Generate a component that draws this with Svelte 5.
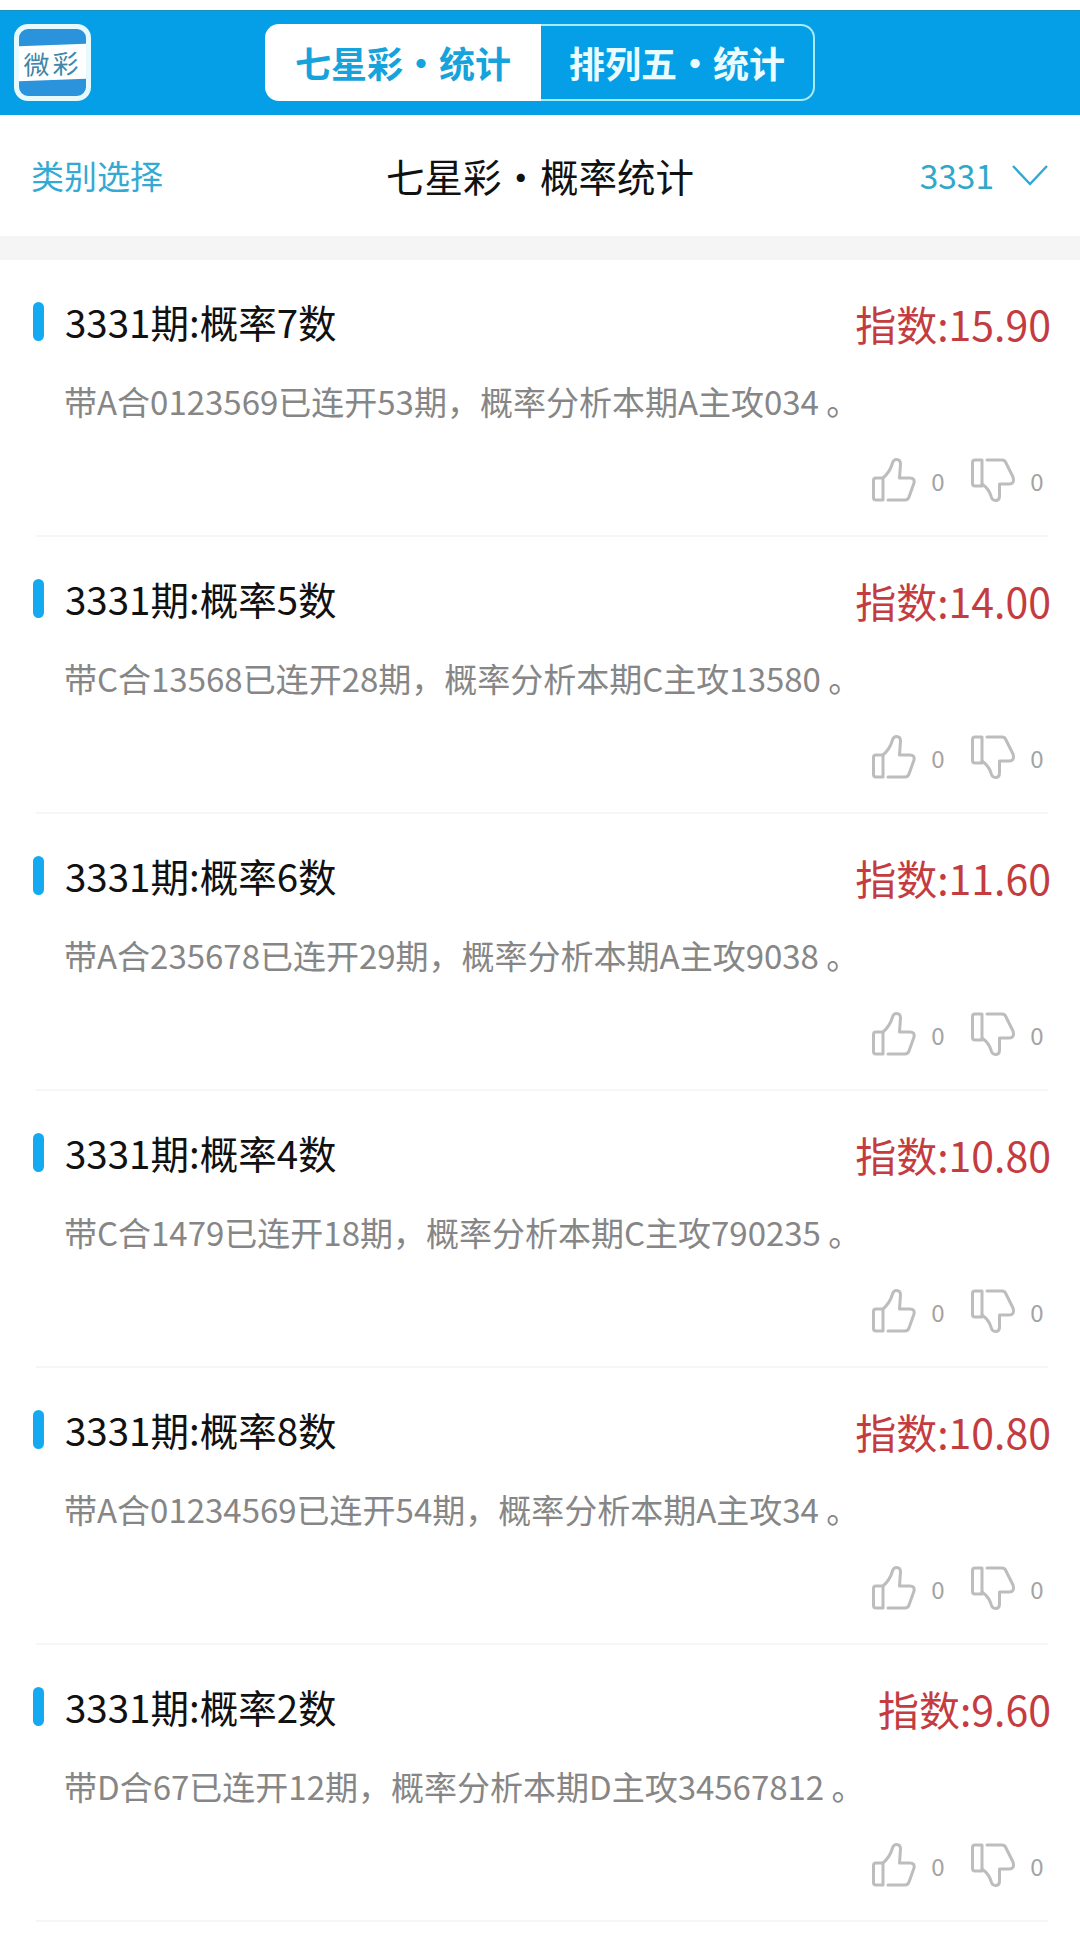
<script lang="ts">
    const items = [
        { n: 7, score: '15.90', text: '带A合0123569已连开53期，概率分析本期A主攻034 。' },
        { n: 5, score: '14.00', text: '带C合13568已连开28期，概率分析本期C主攻13580 。' },
        { n: 6, score: '11.60', text: '带A合235678已连开29期，概率分析本期A主攻9038 。' },
        { n: 4, score: '10.80', text: '带C合1479已连开18期，概率分析本期C主攻790235 。' },
        { n: 8, score: '10.80', text: '带A合01234569已连开54期，概率分析本期A主攻34 。' },
        { n: 2, score: '9.60', text: '带D合67已连开12期，概率分析本期D主攻34567812 。' }
    ]
</script>

<div class="page">
    <!-- Top bar -->
    <header class="topbar">
        <div class="logo">
            <div class="logo-band"><span>微彩</span></div>
        </div>
        <div class="tabs">
            <div class="tab active">七星彩・统计</div>
            <div class="tab">排列五・统计</div>
        </div>
    </header>

    <!-- Sub header -->
    <div class="subhead">
        <span class="pick">类别选择</span>
        <span class="subtitle">七星彩・概率统计</span>
        <div class="period">
            <span>3331</span>
            <svg width="36" height="22" viewBox="0 0 36 22" fill="none">
                <path d="M1 2 L18 20 L35 2" stroke="#2fa9d4" stroke-width="2.4" />
            </svg>
        </div>
    </div>

    <div class="gap"></div>

    <!-- List -->
    <ul class="list">
        {#each items as item}
            <li class="item">
                <div class="row-top">
                    <span class="marker"></span>
                    <span class="title">3331期:概率{item.n}数</span>
                    <span class="score">指数:{item.score}</span>
                </div>
                <p class="desc">{item.text}</p>
                <div class="votes">
                    <svg width="44" height="44" viewBox="0 0 44 44" fill="none" stroke="#bdbdbd" stroke-width="3" stroke-linejoin="round" stroke-linecap="round">
                        <path d="M11 20 H4 Q1.500 20 1.500 22.500 V39.500 Q1.500 42 4 42 H11 Z" />
                        <path d="M16 42 H33 Q36 42 37 39 L42 25 Q43 20 38 20 H27.500 L28.500 6 Q28.500 1.500 24.500 1.500 Q21.500 1.500 20.500 5 Q18 14 11 20" />
                    </svg>
                    <span class="count">0</span>
                    <svg class="down" width="44" height="44" viewBox="0 0 44 44" fill="none" stroke="#bdbdbd" stroke-width="3" stroke-linejoin="round" stroke-linecap="round">
                        <path d="M11 2 H4 Q1.500 2 1.500 4.500 V25.500 Q1.500 28 4 28 H11 Z" />
                        <path d="M16 2 H31 Q34 2 35 5 L42 19 Q44 26 38 26 H28.500 L28.500 38 Q28.500 42.500 24.500 42.500 Q21 42.500 20 38 Q18 31 11 26" />
                    </svg>
                    <span class="count">0</span>
                </div>
            </li>
        {/each}
    </ul>
</div>

<style>
    :global(body) {
        margin: 0;
        background: #fff;
    }
    .page {
        width: 1080px;
        height: 1938px;
        overflow: hidden;
        background: #fff;
        font-family: "Noto Sans CJK SC", "Noto Sans", sans-serif;
    }

    /* top bar */
    .topbar {
        box-sizing: border-box;
        height: 105px;
        margin-top: 10px;
        padding: 13px 0 0 14px;
        display: flex;
        align-items: flex-start;
        background: #049fe6;
        border-top: 1px solid #1a8fc0;
    }
    .logo {
        box-sizing: border-box;
        width: 77px;
        height: 77px;
        border: 5px solid #e6f9fd;
        border-radius: 14px;
        background: #2a93dc;
        display: flex;
        align-items: center;
        overflow: hidden;
    }
    .logo-band {
        width: 100%;
        height: 35px;
        background: #fff;
        transform: skewY(-2deg);
        display: flex;
        align-items: center;
        justify-content: center;
    }
    .logo-band span {
        font-size: 26px;
        line-height: 1;
        letter-spacing: 3px;
        color: #3f86a8;
    }
    .tabs {
        display: flex;
        margin-left: 174px;
    }
    .tab {
        box-sizing: border-box;
        width: 274px;
        height: 77px;
        display: flex;
        align-items: center;
        justify-content: center;
        padding-bottom: 2px;
        font-size: 36px;
        font-weight: 700;
        color: #eafcff;
        border: 2px solid #a6ecf8;
        border-left: none;
        border-radius: 0 14px 14px 0;
    }
    .tab.active {
        width: 276px;
        background: #fff;
        color: #16a3dc;
        border: none;
        border-radius: 14px 0 0 14px;
    }

    /* sub header */
    .subhead {
        box-sizing: border-box;
        height: 121px;
        padding: 0 32px 2px 31px;
        display: flex;
        align-items: center;
    }
    .pick {
        font-size: 33px;
        color: #33a9d3;
    }
    .subtitle {
        margin-left: 223px;
        font-size: 38.500px;
        color: #111;
    }
    .period {
        margin-left: auto;
        display: flex;
        align-items: center;
        gap: 18px;
        font-size: 33.500px;
        color: #2fa9c9;
    }
    .gap {
        height: 24px;
        background: #f5f5f5;
    }

    /* list */
    .list {
        list-style: none;
        margin: 0;
        padding: 0;
    }
    .item {
        box-sizing: border-box;
        height: 277px;
        margin: 0 32px 0 36px;
        padding-top: 35px;
        border-bottom: 2px solid #f6f6f6;
    }
    .row-top {
        height: 52px;
        display: flex;
        align-items: center;
    }
    .marker {
        width: 11px;
        height: 39px;
        margin: 1px 21px 0 -3px;
        border-radius: 6px;
        background: #14a9f0;
    }
    .title {
        font-size: 38.500px;
        color: #111;
    }
    .score {
        margin-left: auto;
        margin-right: -3px;
        font-size: 41px;
        color: #c43c40;
        transform: translateY(2px);
    }
    .desc {
        margin: 34px 0 0 28px;
        font-size: 33px;
        line-height: 40px;
        color: #868686;
        white-space: nowrap;
    }
    .votes {
        margin-top: 37px;
        margin-right: -2px;
        display: flex;
        align-items: center;
        justify-content: flex-end;
    }
    .count {
        width: 26px;
        margin-left: 9px;
        text-align: center;
        font-size: 24px;
        color: #a3a3a3;
    }
    .down {
        margin-left: 20px;
    }
</style>
